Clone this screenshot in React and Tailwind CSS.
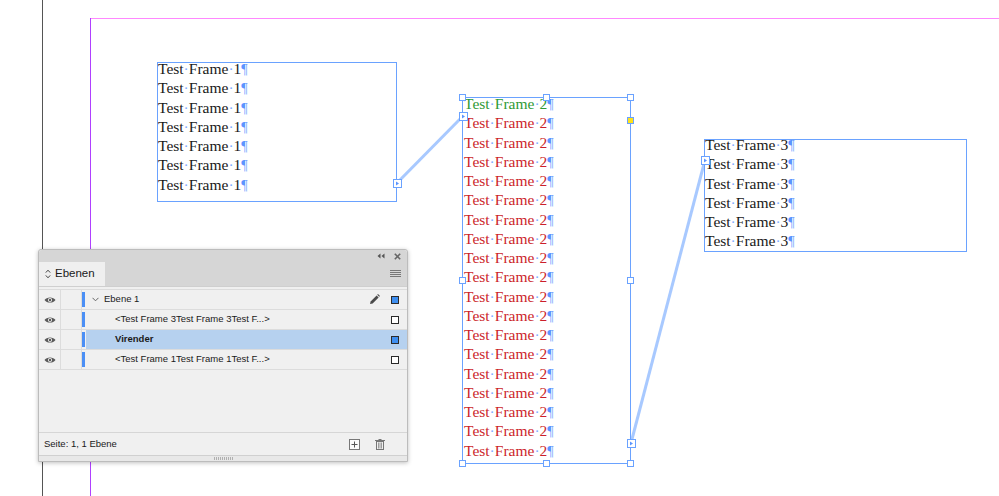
import React from "react";

const BLUE = "#6aa2ff";

function Port({ x, y }) {
  return (
    <div
      className="absolute w-[9px] h-[9px] bg-white border border-[#6aa2ff] flex items-center justify-center"
      style={{ left: x - 4.5, top: y - 4.5 }}
    >
      <svg width="5" height="5" viewBox="0 0 5 5">
        <path d="M1 0.5 L4 2.5 L1 4.5 Z" fill="#5b95ff" />
      </svg>
    </div>
  );
}

function Handle({ x, y, yellow }) {
  return (
    <div
      className={
        "absolute w-[7px] h-[7px] border border-[#6aa2ff] " +
        (yellow ? "bg-[#ffe11a]" : "bg-white")
      }
      style={{ left: x - 3.5, top: y - 3.5 }}
    />
  );
}

function TextLine({ n, cls }) {
  return (
    <div className={"h-[19.25px] leading-[19.25px] whitespace-nowrap " + cls}>
      Test<span className="text-[#7fabff]">·</span>Frame
      <span className="text-[#7fabff]">·</span>
      {n}
      <span className="text-[#5b95ff] text-[14px]">¶</span>
    </div>
  );
}

function Eye() {
  return (
    <svg width="12" height="8" viewBox="0 0 12 8">
      <path d="M0.5 4 C2.5 0.6 9.5 0.6 11.5 4 C9.5 7.4 2.5 7.4 0.5 4 Z" fill="#5a5a5a" />
      <circle cx="6" cy="4" r="2.1" fill="#f0f0f0" />
      <circle cx="6" cy="4" r="1.2" fill="#5a5a5a" />
    </svg>
  );
}

function Square({ filled }) {
  return (
    <div
      className={
        "w-[8px] h-[8px] border border-[#2a2a2a] " +
        (filled ? "bg-[#3f8ff0]" : "bg-white")
      }
    />
  );
}

function Row({ selected, children, right, pencil }) {
  return (
    <div className="flex h-[20px] border-b border-[#dcdcdc]">
      <div className="w-[22px] flex items-center justify-center border-r border-[#dcdcdc]">
        <Eye />
      </div>
      <div className="w-[21px] border-r border-[#dcdcdc]" />
      <div className="w-[4px] flex flex-col py-[2px]">
        <div className="flex-1 w-[3px] bg-[#4b8ff5]" />
      </div>
      <div
        className={
          "flex-1 flex items-center pr-[8px] " + (selected ? "bg-[#b6d1ef]" : "")
        }
      >
        <div className="flex-1 flex items-center">{children}</div>
        {pencil && (
          <svg width="11" height="11" viewBox="0 0 11 11" className="mr-[11px]">
            <path d="M1 10 L1.6 7.4 L7.6 1.4 L9.6 3.4 L3.6 9.4 Z" fill="#4a4a4a" />
            <path d="M8.2 0.8 L9 0 L11 2 L10.2 2.8 Z" fill="#4a4a4a" />
          </svg>
        )}
        {right}
      </div>
    </div>
  );
}

export default function App() {
  const serif = { fontFamily: '"Liberation Serif", "DejaVu Serif", serif' };
  return (
    <div className="relative w-[999px] h-[496px] overflow-hidden bg-white">
      {/* page edge and margins */}
      <div className="absolute left-[42px] top-0 bottom-0 w-px bg-[#555555]" />
      <div className="absolute left-[90px] top-[18px] right-0 h-px bg-[#ff88ff]" />
      <div className="absolute left-[90px] top-[18px] bottom-0 w-px bg-[#b040ff]" />

      {/* thread lines */}
      <svg className="absolute left-0 top-0" width="999" height="496">
        <line x1="397" y1="183" x2="463" y2="116" stroke="#a8c9ff" strokeWidth="3" />
        <line x1="631" y1="443" x2="705" y2="160" stroke="#a8c9ff" strokeWidth="3" />
      </svg>

      {/* Frame 1 */}
      <div
        className="absolute left-[157px] top-[62px] w-[240px] h-[140px] border border-[#6aa2ff] text-[15.5px] text-[#1a1a1a]"
        style={serif}
      >
        <div className="-mt-[4px]">
          {Array.from({ length: 7 }).map((_, i) => (
            <TextLine key={i} n="1" cls="" />
          ))}
        </div>
      </div>

      {/* Frame 2 */}
      <div
        className="absolute left-[462px] top-[97px] w-[169px] h-[367px] border border-[#6aa2ff] text-[15.5px]"
        style={serif}
      >
        <div className="-mt-[4px] pl-px">
          {Array.from({ length: 19 }).map((_, i) => (
            <TextLine key={i} n="2" cls={i === 0 ? "text-[#2f9a36]" : "text-[#cc1f2b]"} />
          ))}
        </div>
      </div>

      {/* Frame 3 */}
      <div
        className="absolute left-[704px] top-[139px] w-[263px] h-[113px] border border-[#6aa2ff] text-[15.5px] text-[#1a1a1a]"
        style={serif}
      >
        <div className="-mt-[5px]">
          {Array.from({ length: 6 }).map((_, i) => (
            <TextLine key={i} n="3" cls="" />
          ))}
        </div>
      </div>

      {/* handles frame 2 */}
      <Handle x={462.5} y={97.5} />
      <Handle x={546.5} y={97.5} />
      <Handle x={630.5} y={97.5} />
      <Handle x={462.5} y={280} />
      <Handle x={630.5} y={280} />
      <Handle x={462.5} y={463.5} />
      <Handle x={546.5} y={463.5} />
      <Handle x={630.5} y={463.5} />
      <Handle x={630.5} y={120} yellow />

      {/* ports */}
      <Port x={397.5} y={183} />
      <Port x={463.5} y={116.5} />
      <Port x={631} y={443.5} />
      <Port x={705} y={160} />

      {/* Layers panel */}
      <div
        className="absolute left-[38px] top-[249px] w-[370px] h-[213px] bg-[#f0f0f0] border border-[#bcbcbc] rounded-t-[3px] shadow-[0_1px_4px_rgba(0,0,0,0.25)] flex flex-col text-[#1a1a1a]"
        style={{ fontFamily: '"Liberation Sans", Arial, sans-serif' }}
      >
        {/* title bar */}
        <div className="h-[12px] bg-[#d6d6d6] flex items-center justify-end pr-[6px] gap-[9px] rounded-t-[3px]">
          <svg width="8" height="6" viewBox="0 0 8 6">
            <path d="M3.5 0.5 L0.5 3 L3.5 5.5 Z M7.5 0.5 L4.5 3 L7.5 5.5 Z" fill="#555" />
          </svg>
          <svg width="7" height="7" viewBox="0 0 7 7">
            <path d="M0.8 0.8 L6.2 6.2 M6.2 0.8 L0.8 6.2" stroke="#666" strokeWidth="1.6" />
          </svg>
        </div>
        {/* tab row */}
        <div className="h-[25px] bg-[#d6d6d6] flex items-stretch border-b border-[#cfcfcf]">
          <div className="w-[66px] bg-[#efefef] flex items-center pl-[6px] gap-[4px] text-[11.5px]">
            <svg width="6" height="10" viewBox="0 0 6 10">
              <path d="M0.8 3.6 L3 1.2 L5.2 3.6 M0.8 6.4 L3 8.8 L5.2 6.4" stroke="#444" strokeWidth="1" fill="none" />
            </svg>
            <span>Ebenen</span>
          </div>
          <div className="flex-1 flex items-center justify-end pr-[6px]">
            <svg width="11" height="8" viewBox="0 0 11 8">
              <path d="M0 0.5 H11 M0 2.5 H11 M0 4.5 H11 M0 6.5 H11" stroke="#777" strokeWidth="1" />
            </svg>
          </div>
        </div>
        {/* list */}
        <div className="pt-[2px] flex-1 flex flex-col text-[9.5px]">
          <div className="border-t border-[#dcdcdc]" />
          <Row pencil right={<Square filled />}>
            <svg width="7" height="5" viewBox="0 0 7 5" className="ml-[6px] mr-[5px]">
              <path d="M0.5 0.8 L3.5 3.8 L6.5 0.8" stroke="#666" strokeWidth="1" fill="none" />
            </svg>
            <span>Ebene 1</span>
          </Row>
          <Row right={<Square />}>
            <span className="ml-[29px]">&lt;Test Frame 3Test Frame 3Test F...&gt;</span>
          </Row>
          <Row selected right={<Square filled />}>
            <span className="ml-[29px] font-bold">Virender</span>
          </Row>
          <Row right={<Square />}>
            <span className="ml-[29px]">&lt;Test Frame 1Test Frame 1Test F...&gt;</span>
          </Row>
        </div>
        {/* footer */}
        <div className="h-[23px] border-t border-[#d6d6d6] flex items-center pl-[5px] pr-[22px] text-[9.5px]">
          <span className="flex-1">Seite: 1, 1 Ebene</span>
          <svg width="11" height="11" viewBox="0 0 11 11" className="mr-[15px]">
            <rect x="0.5" y="0.5" width="10" height="10" fill="#fafafa" stroke="#777" />
            <path d="M5.5 2.5 V8.5 M2.5 5.5 H8.5" stroke="#555" strokeWidth="1" />
          </svg>
          <svg width="10" height="11" viewBox="0 0 10 11">
            <path d="M0 1.5 H10" stroke="#777" strokeWidth="1" />
            <path d="M3.5 0.5 H6.5" stroke="#777" strokeWidth="1" />
            <rect x="1.5" y="2.5" width="7" height="8" fill="none" stroke="#777" />
            <path d="M3.5 3.5 V9.5 M5 3.5 V9.5 M6.5 3.5 V9.5" stroke="#888" strokeWidth="0.8" />
          </svg>
        </div>
        {/* grip */}
        <div className="h-[6px] border-t border-[#d0d0d0] bg-[#e8e8e8] flex items-center justify-center">
          <svg width="19" height="3" viewBox="0 0 19 3">
            <path d="M0.5 0 V3 M2.5 0 V3 M4.5 0 V3 M6.5 0 V3 M8.5 0 V3 M10.5 0 V3 M12.5 0 V3 M14.5 0 V3 M16.5 0 V3 M18.5 0 V3" stroke="#b0b0b0" strokeWidth="1" />
          </svg>
        </div>
      </div>
    </div>
  );
}
